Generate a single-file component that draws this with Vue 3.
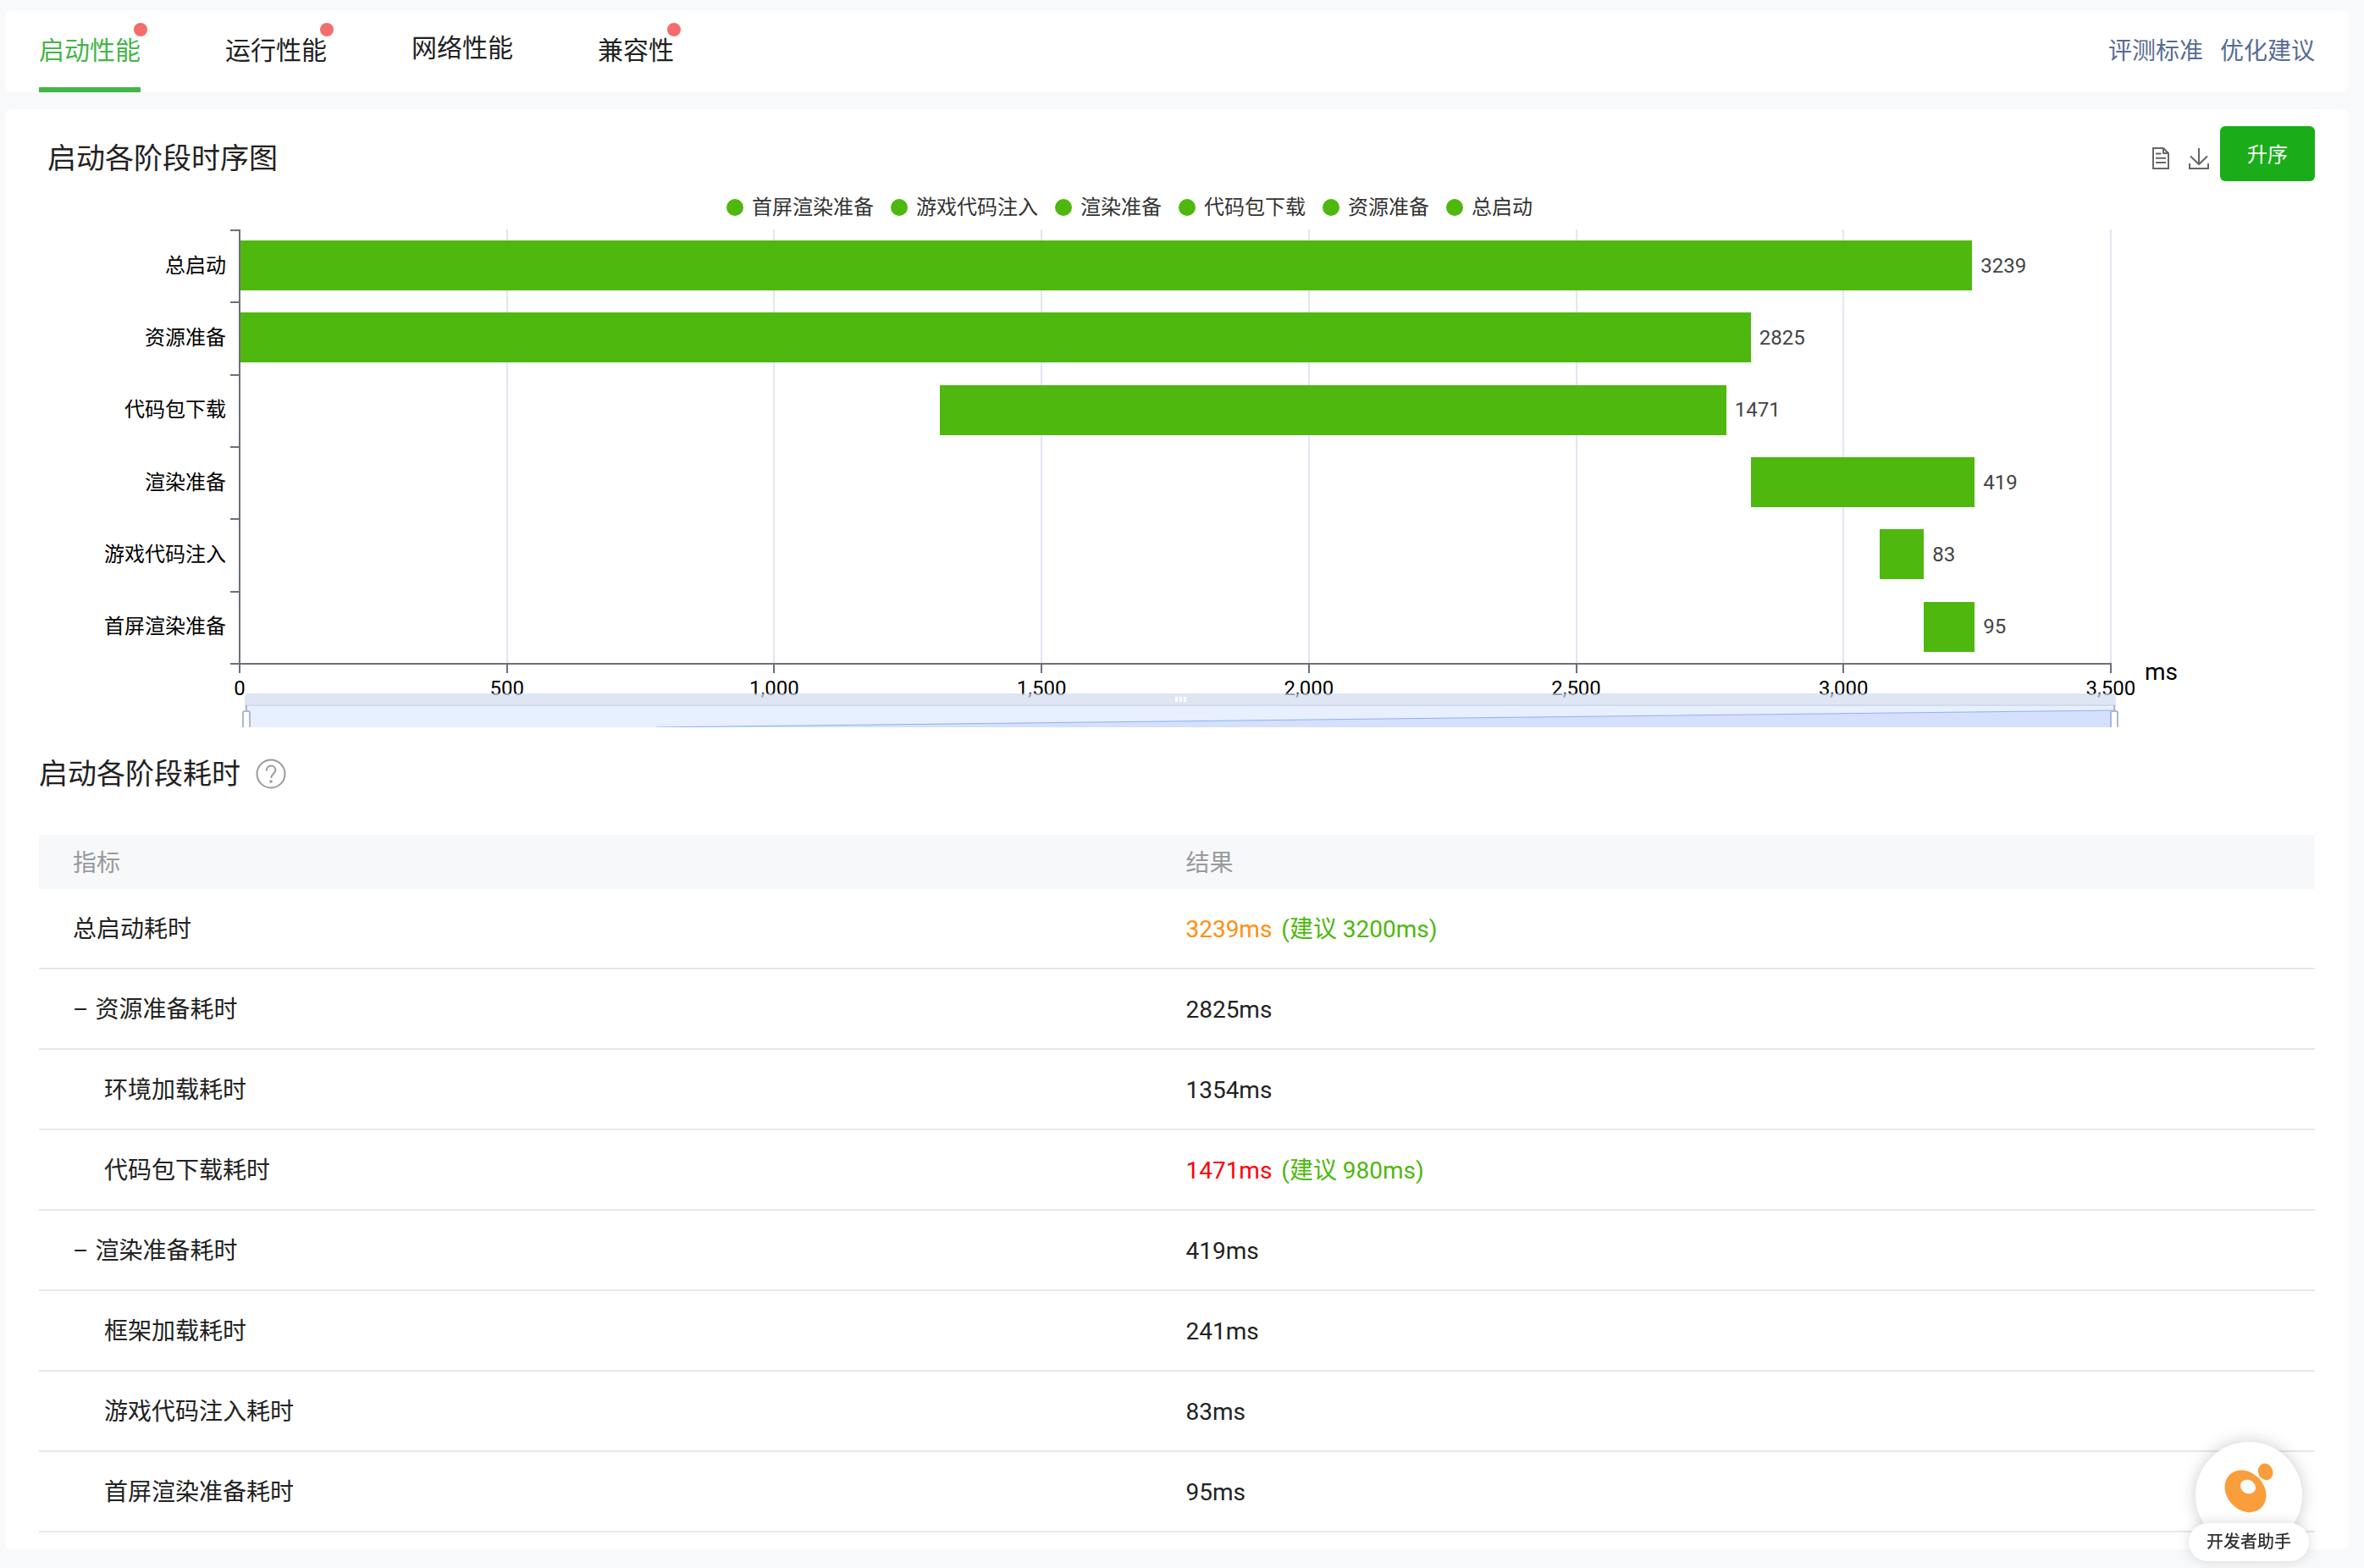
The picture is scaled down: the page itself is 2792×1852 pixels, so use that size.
<script setup>
import { ref, computed } from 'vue'

const tabs = [
  { name: '启动性能', badge: true },
  { name: '运行性能', badge: true },
  { name: '网络性能', badge: false },
  { name: '兼容性', badge: true }
]
const activeTab = ref('启动性能')

const AXIS_MAX = 3500
const ticks = [0, 500, 1000, 1500, 2000, 2500, 3000, 3500]

const stages = ref([
  { name: '总启动', start: 0, cost: 3239 },
  { name: '资源准备', start: 0, cost: 2825 },
  { name: '代码包下载', start: 1308, cost: 1471 },
  { name: '渲染准备', start: 2825, cost: 419 },
  { name: '游戏代码注入', start: 3066, cost: 83 },
  { name: '首屏渲染准备', start: 3149, cost: 95 }
])

const legend = computed(() => [...stages.value].reverse())

const rows = [
  { name: '总启动耗时', result: '3239ms', status: 'warn', advice: '(建议 3200ms)' },
  { name: '资源准备耗时', result: '2825ms', group: true },
  { name: '环境加载耗时', result: '1354ms', child: true },
  { name: '代码包下载耗时', result: '1471ms', status: 'error', advice: '(建议 980ms)', child: true },
  { name: '渲染准备耗时', result: '419ms', group: true },
  { name: '框架加载耗时', result: '241ms', child: true },
  { name: '游戏代码注入耗时', result: '83ms', child: true },
  { name: '首屏渲染准备耗时', result: '95ms', child: true }
]

const percent = (value) => (value / AXIS_MAX) * 100 + '%'

const formatTick = (value) => value.toLocaleString('en-US')

const barStyle = (stage) => ({
  marginLeft: percent(stage.start),
  width: percent(stage.cost)
})

const toggleOrder = () => {
  stages.value.reverse()
}
</script>

<template>
  <div class="page">
    <!-- Onglets -->
    <header class="card top-bar">
      <nav class="tabs">
        <button
          v-for="tab in tabs"
          :key="tab.name"
          type="button"
          class="tab"
          :class="{ active: tab.name === activeTab, badged: tab.badge }"
          @click="activeTab = tab.name"
        >
          {{ tab.name }}
          <i v-if="tab.badge" class="badge"></i>
        </button>
      </nav>
      <div class="links">
        <a href="#standard">评测标准</a>
        <a href="#advice">优化建议</a>
      </div>
    </header>

    <main class="card content">
      <section class="chart-section">
        <div class="chart">
          <div class="chart-header">
            <h2 class="title">启动各阶段时序图</h2>
            <div class="tools">
              <button type="button" class="tool" aria-label="数据视图">
                <svg viewBox="0 0 30 30" width="30" height="30">
                  <path d="M6 3h12l6 6v18H6z M18 3v6h6 M9 9.500h6.500 M9 14.700h12 M9 20h12" />
                </svg>
              </button>
              <button type="button" class="tool" aria-label="下载">
                <svg viewBox="0 0 30 30" width="30" height="30">
                  <path d="M15 3v19 M5 12.500l10 9.500 10-9.500 M4 21v6h22v-6" />
                </svg>
              </button>
            </div>
          </div>

          <ul class="legend">
            <li v-for="stage in legend" :key="stage.name">
              <i class="legend-dot"></i>{{ stage.name }}
            </li>
          </ul>

          <div class="chart-body">
            <div class="y-labels">
              <span v-for="stage in stages" :key="stage.name">{{ stage.name }}</span>
            </div>
            <div class="y-ticks">
              <i v-for="stage in stages" :key="stage.name"></i>
            </div>
            <div class="plot">
              <div class="grid-lines">
                <i v-for="tick in ticks.slice(1)" :key="tick"></i>
              </div>
              <div class="bars">
                <div v-for="stage in stages" :key="stage.name" class="bar-row">
                  <div class="bar" :style="barStyle(stage)"></div>
                  <span class="bar-value">{{ stage.cost }}</span>
                </div>
              </div>
            </div>
            <div class="unit">ms</div>
            <div class="x-line"></div>
            <div class="x-axis">
              <div v-for="tick in ticks" :key="tick" class="x-tick">
                <i></i>
                <span>{{ formatTick(tick) }}</span>
              </div>
            </div>
          </div>

          <!-- Zone de zoom, coupée par le bas du graphique -->
          <div class="zoom-slider">
            <div class="zoom-move"><i></i><i></i><i></i></div>
            <svg class="zoom-area" viewBox="0 0 100 25" preserveAspectRatio="none">
              <path class="zoom-fill" d="M22 25L100 5V25z" />
              <path class="zoom-line" d="M22 25L100 5" />
            </svg>
            <i class="zoom-handle left"></i>
            <i class="zoom-handle right"></i>
          </div>
        </div>
        <button type="button" class="sort-btn" @click="toggleOrder">升序</button>
      </section>

      <section>
        <div class="table-header">
          <h2 class="title">启动各阶段耗时</h2>
          <svg class="help" viewBox="0 0 36 36" width="36" height="36">
            <circle cx="18" cy="18" r="16.500" />
            <path d="M12.700 14.500c0-3.500 2.200-6 5.400-6s5.300 2.200 5.300 5.100c0 4.400-5.200 4.600-5.200 9.400" />
            <circle class="help-dot" cx="18" cy="27" r="1.800" />
          </svg>
        </div>

        <table class="cost-table">
          <thead>
            <tr>
              <th class="col-name">指标</th>
              <th>结果</th>
            </tr>
          </thead>
          <tbody>
            <tr v-for="row in rows" :key="row.name">
              <td :class="{ child: row.child }">
                <span v-if="row.group" class="dash">–</span>{{ row.name }}
              </td>
              <td>
                <span :class="row.status">{{ row.result }}</span>
                <span v-if="row.advice" class="advice">&nbsp;{{ row.advice }}</span>
              </td>
            </tr>
          </tbody>
        </table>
      </section>
    </main>

    <button type="button" class="assistant">
      <span class="assistant-logo">
        <svg viewBox="0 0 378 378" width="126" height="126">
          <ellipse cx="177" cy="175" rx="81" ry="66" transform="rotate(47 177 175)" fill="#fa9d3b" />
          <ellipse cx="186" cy="159" rx="28" ry="24" transform="rotate(30 186 159)" fill="#fff" />
          <ellipse cx="248" cy="106" rx="30" ry="26" transform="rotate(65 248 106)" fill="#fa9d3b" />
        </svg>
      </span>
      <span class="assistant-label">开发者助手</span>
    </button>
  </div>
</template>

<style>
body {
  margin: 0;
  background: #f8f9fb;
}
</style>

<style scoped>
.page {
  padding: 12px 18px 24px 6px;
  font-family: Roboto, "Noto Sans CJK SC", sans-serif;
  font-size: 28px;
  color: #222;
}

button {
  padding: 0;
  border: none;
  background: none;
  font-family: inherit;
  color: inherit;
  cursor: pointer;
}

.card {
  background: #fff;
  border-radius: 8px;
}

/* --- TOP BAR --- */
.top-bar {
  display: flex;
  justify-content: space-between;
  height: 97px;
  padding: 0 40px;
  margin-bottom: 20px;
}

.tabs {
  display: flex;
  gap: 100px;
}

.tab {
  position: relative;
  box-sizing: border-box;
  padding-bottom: 2px;
  border-bottom: 6px solid transparent;
  font-size: 30px;
  line-height: 40px;
}

.tab.badged {
  padding-bottom: 0;
  padding-top: 4px;
}

.tab.active {
  color: #44b549;
  border-bottom-color: #44b549;
}

.badge {
  position: absolute;
  top: 15px;
  right: -8px;
  width: 16px;
  height: 16px;
  border-radius: 50%;
  background: #f56c6c;
}

.links {
  display: flex;
  align-items: center;
  gap: 20px;
}

.links a {
  color: #576b95;
  line-height: 40px;
  text-decoration: none;
}

/* --- CHART --- */
.content {
  padding: 20px 40px;
}

.chart-section {
  display: flex;
  align-items: flex-start;
}

.chart {
  flex: 1;
  min-width: 0;
}

.chart-header {
  display: flex;
  justify-content: space-between;
  align-items: center;
  padding: 14px 10px 0;
}

.title {
  margin: 0;
  font-size: 34px;
  font-weight: 400;
  line-height: 48px;
}

.tools {
  display: flex;
  gap: 15px;
}

.tool svg {
  display: block;
  fill: none;
  stroke: #666;
  stroke-width: 2;
}

.sort-btn {
  width: 112px;
  height: 65px;
  padding-bottom: 2px;
  border-radius: 6px;
  background: #1aad19;
  color: #fff;
  font-size: 24px;
}

.legend {
  display: flex;
  justify-content: center;
  gap: 20px;
  margin: 20px 0 12px;
  padding: 0;
  list-style: none;
  font-size: 24px;
  line-height: 28px;
  color: #333;
}

.legend li {
  display: flex;
  align-items: center;
  gap: 10px;
}

.legend-dot {
  width: 20px;
  height: 20px;
  border-radius: 50%;
  background: #4eb80e;
}

.chart-body {
  display: grid;
  grid-template-columns: 226px 10px 1fr 128px;
  grid-template-rows: 512px 2px auto;
  font-size: 24px;
  line-height: 28px;
  color: #000;
}

.y-labels,
.y-ticks,
.bars {
  display: grid;
  grid-template-rows: repeat(6, 1fr);
}

.y-labels {
  align-items: center;
  justify-items: end;
  padding-right: 5px;
}

.y-ticks i {
  border-top: 2px solid #6e7079;
}

.plot {
  display: grid;
  border-left: 2px solid #6e7079;
}

.grid-lines,
.bars {
  grid-area: 1 / 1;
  min-width: 0;
}

.grid-lines {
  display: grid;
  grid-template-columns: repeat(7, 1fr);
}

.grid-lines i {
  border-right: 2px solid #e0e6f1;
}

.bar-row {
  display: flex;
  align-items: center;
}

.bar {
  flex: none;
  height: 59px;
  background: #4eb80e;
}

.bar-value {
  margin-left: 10px;
  color: #444;
}

.unit {
  align-self: end;
  padding-left: 39px;
  margin-bottom: -28px;
  font-size: 28px;
  line-height: 34px;
}

.x-line {
  grid-column: 2 / 4;
  background: #6e7079;
}

.x-axis {
  grid-column: 3;
  display: flex;
  justify-content: space-between;
}

.x-tick {
  display: flex;
  flex-direction: column;
  align-items: center;
  gap: 4px;
  width: 2px;
}

.x-tick i {
  width: 2px;
  height: 10px;
  background: #6e7079;
}

/* --- ZOOM SLIDER --- */
.zoom-slider {
  position: relative;
  height: 40px;
  margin: -8px 120px 0 240px;
  padding: 0 3px;
  overflow: hidden;
}

.zoom-move {
  display: flex;
  justify-content: center;
  align-items: center;
  gap: 2px;
  height: 13px;
  border-bottom: 2px solid #d2dbee;
  border-radius: 4px 4px 0 0;
  background: rgba(210, 219, 238, 0.7);
}

.zoom-move i {
  width: 3px;
  height: 6px;
  background: #fff;
}

.zoom-area {
  display: block;
  width: 100%;
  height: 25px;
  background: #e8effe;
}

.zoom-fill {
  fill: #d5e0fc;
}

.zoom-line {
  fill: none;
  stroke: #8fb0f7;
  stroke-width: 1;
  vector-effect: non-scaling-stroke;
}

.zoom-handle {
  position: absolute;
  top: 20px;
  width: 6px;
  height: 24px;
  border: 2px solid #acb8d1;
  border-radius: 3px;
  background: #fff;
}

.zoom-handle::before {
  content: "";
  position: absolute;
  top: -8px;
  left: 2px;
  width: 2px;
  height: 7px;
  background: #acb8d1;
}

.zoom-handle.left {
  left: 0;
}

.zoom-handle.right {
  right: 0;
}

/* --- TABLE --- */
.table-header {
  display: flex;
  align-items: center;
  gap: 18px;
  margin: 31px 0 48px;
}

.help {
  fill: none;
  stroke: #9a9a9a;
  stroke-width: 2;
}

.help-dot {
  fill: #9a9a9a;
  stroke: none;
}

.cost-table {
  width: 100%;
  border-collapse: separate;
  border-spacing: 0;
  table-layout: fixed;
  line-height: 40px;
}

.col-name {
  width: 48.9%;
}

th,
td {
  box-sizing: border-box;
  padding: 0 40px;
  text-align: left;
}

th {
  height: 64px;
  padding-top: 4px;
  background: #f7f8fa;
  color: #9a9a9a;
  font-weight: 400;
}

td {
  height: 95px;
  padding-top: 2px;
  border-bottom: 2px solid #e7e7eb;
}

td.child {
  padding-left: 77px;
}

.dash {
  margin-right: 8px;
}

.warn {
  color: #ff8f0f;
}

.error {
  color: #f00;
}

.advice {
  margin-left: 4px;
  color: #4eb80e;
}

/* --- ASSISTANT --- */
.assistant {
  position: fixed;
  right: 65px;
  bottom: 8px;
  display: flex;
  flex-direction: column;
  align-items: center;
}

.assistant-logo {
  height: 126px;
  border-radius: 50%;
  background: #fff;
  box-shadow: 0 0 20px rgba(0, 0, 0, 0.2);
}

.assistant-label {
  z-index: 1;
  margin-top: -30px;
  padding: 0 21px;
  border-radius: 23px;
  background: #fff;
  box-shadow: 0 0 16px rgba(0, 0, 0, 0.15);
  font-size: 20px;
  font-weight: 500;
  line-height: 45px;
  color: #333;
}
</style>
